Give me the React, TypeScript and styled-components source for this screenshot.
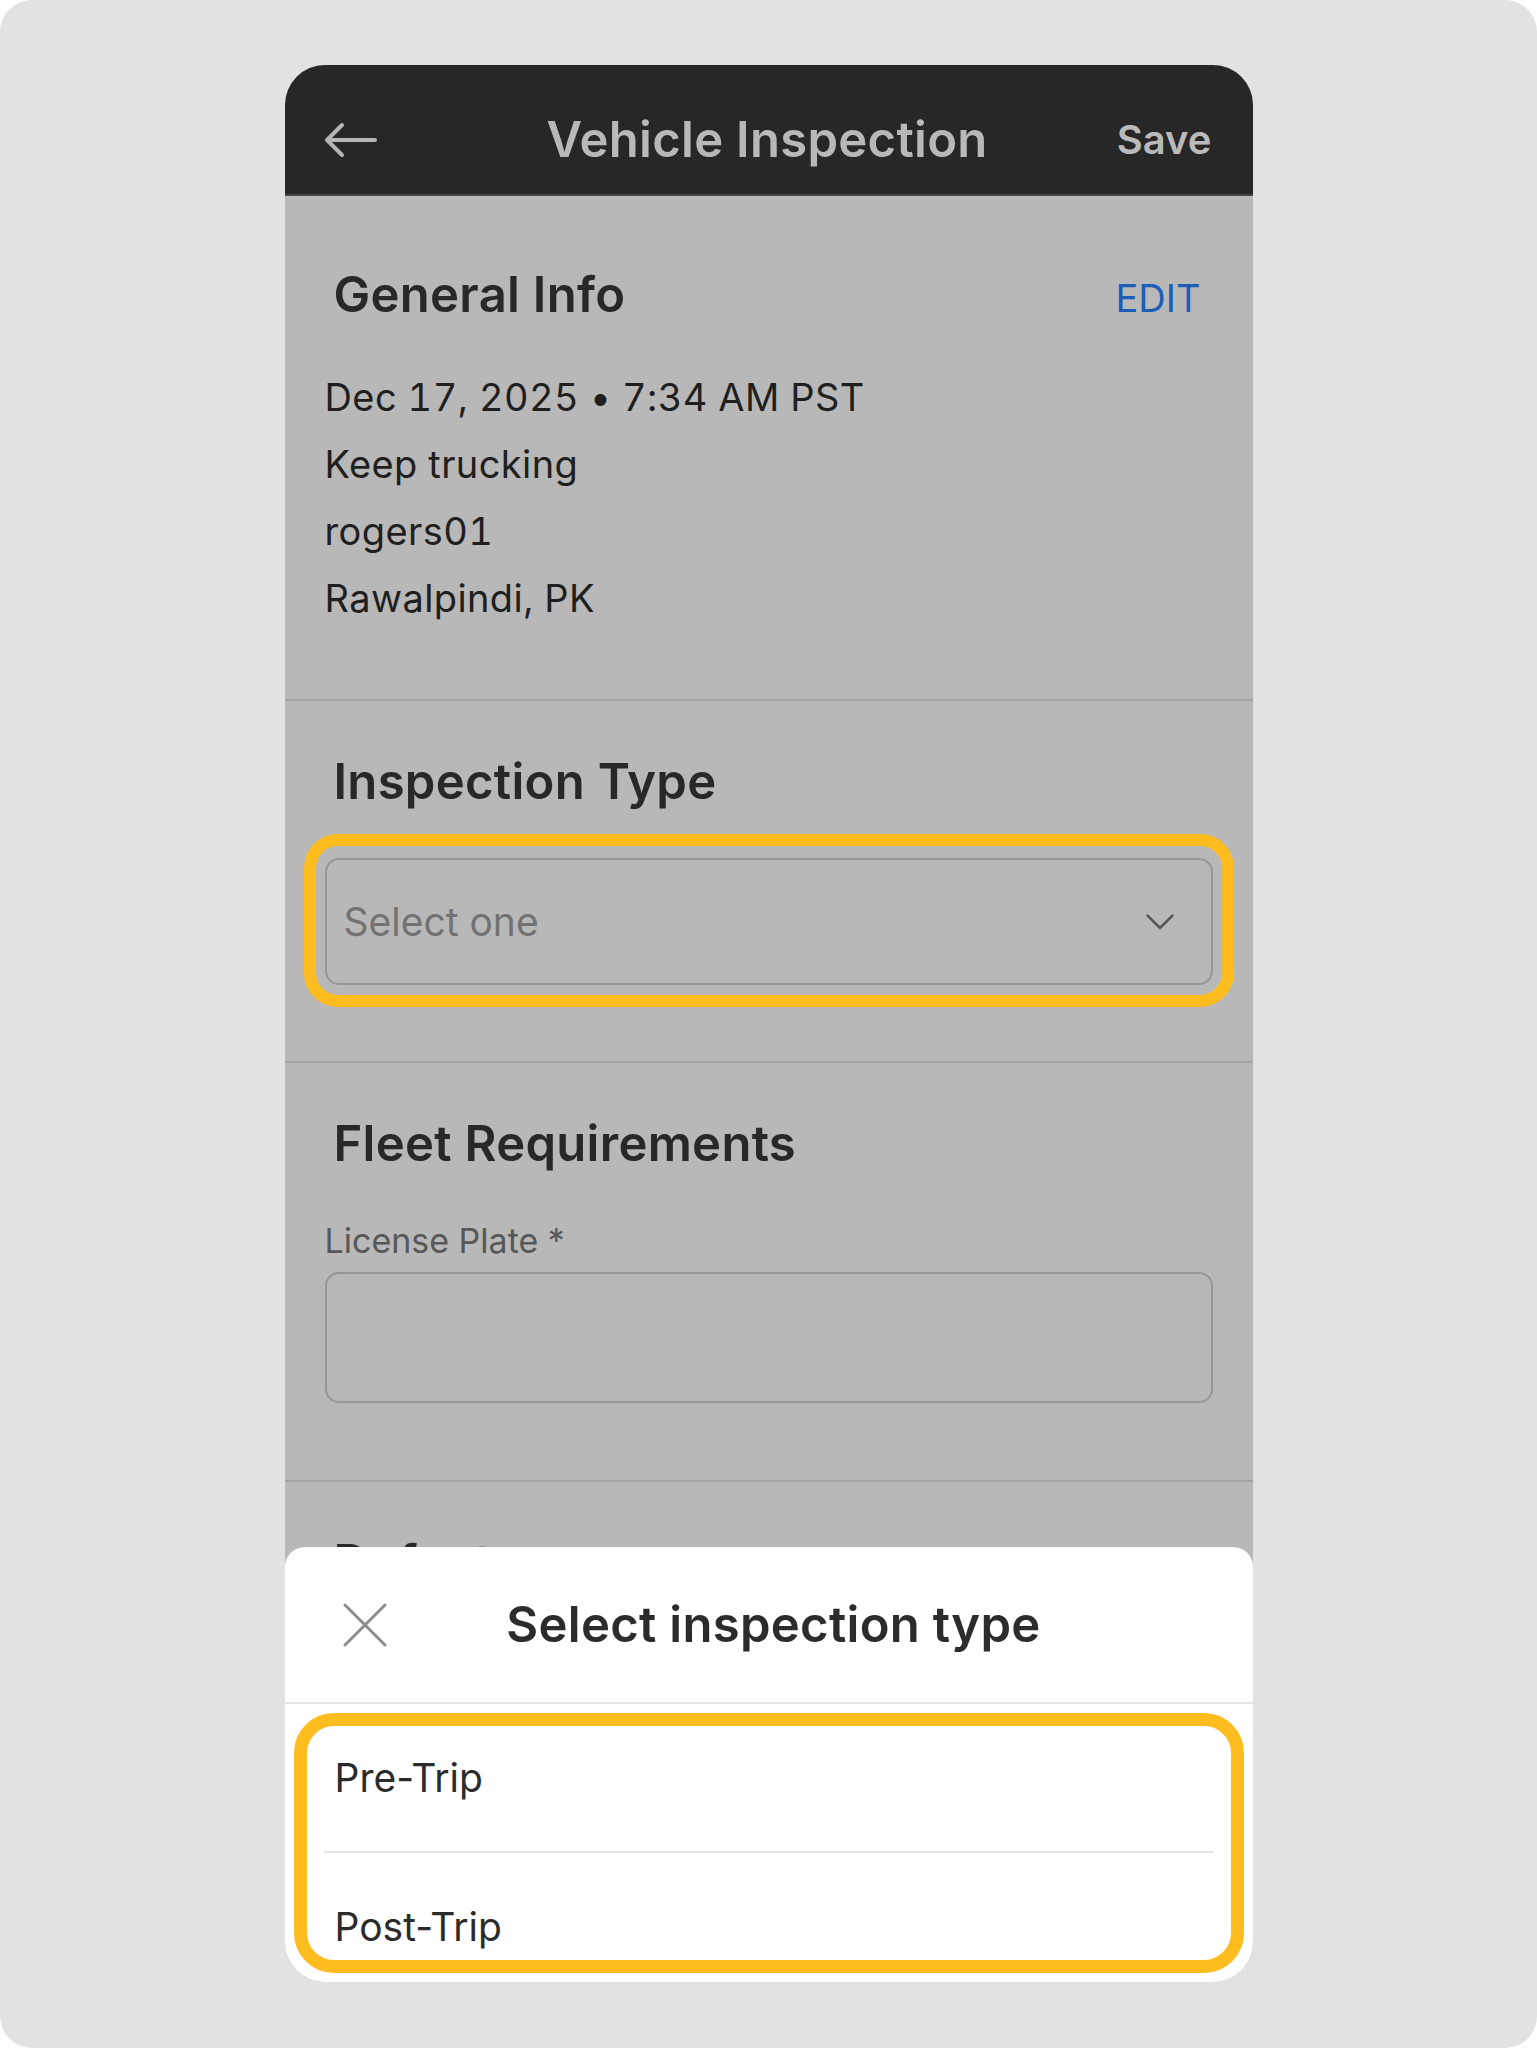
import React from 'react';
import styled, { createGlobalStyle } from 'styled-components';

const GlobalStyle = createGlobalStyle`
  html, body {
    margin: 0;
    padding: 0;
    background: #ffffff;
  }
  body {
    font-family: Inter, "Noto Sans", sans-serif;
  }
  * {
    box-sizing: border-box;
  }
`;

const generalInfo = ['Dec 17, 2025 • 7:34 AM PST', 'Keep trucking', 'rogers01', 'Rawalpindi, PK'];
const inspectionTypes = ['Pre-Trip', 'Post-Trip'];

const BackArrow = () => (
    <svg width="54" height="36" viewBox="0 0 54 36" fill="none">
        <path d="M52 18H4M19 3L4 18l15 15" stroke="#b5b5b5" strokeWidth="4" strokeLinecap="round" strokeLinejoin="round" />
    </svg>
);

const Chevron = () => (
    <svg width="28" height="16" viewBox="0 0 28 16" fill="none">
        <path d="M1.5 1.5L14 14 26.5 1.5" stroke="#575757" strokeWidth="2.5" strokeLinecap="round" strokeLinejoin="round" />
    </svg>
);

const CloseIcon = () => (
    <svg width="44" height="44" viewBox="0 0 44 44" fill="none">
        <path d="M2 2l40 40M42 2L2 42" stroke="#8c8c8c" strokeWidth="3" strokeLinecap="round" />
    </svg>
);

export default function App() {
    return (
        <>
            <GlobalStyle />
            <Page>
                <Phone>
                    <Header>
                        <IconButton>
                            <BackArrow />
                        </IconButton>
                        <HeaderTitle>Vehicle Inspection</HeaderTitle>
                        <SaveButton>Save</SaveButton>
                    </Header>

                    <Section $top={70} $bottom={67}>
                        <HeadingRow>
                            <SectionTitle>General Info</SectionTitle>
                            <EditLink>EDIT</EditLink>
                        </HeadingRow>
                        <InfoList>
                            {generalInfo.map((line) => (
                                <InfoLine key={line}>{line}</InfoLine>
                            ))}
                        </InfoList>
                    </Section>

                    <Section $top={52} $bottom={76}>
                        <HeadingRow>
                            <SectionTitle>Inspection Type</SectionTitle>
                        </HeadingRow>
                        <Highlighted $gap={47}>
                            <SelectBox>
                                <Placeholder>Select one</Placeholder>
                                <Chevron />
                            </SelectBox>
                            <Ring $top={-24} $bottom={-22} $side={-21} $width={12} $radius={34} />
                        </Highlighted>
                    </Section>

                    <Section $top={52} $bottom={77}>
                        <HeadingRow>
                            <SectionTitle>Fleet Requirements</SectionTitle>
                        </HeadingRow>
                        <FieldLabel>License Plate *</FieldLabel>
                        <TextBox />
                    </Section>

                    <Section $top={52} $bottom={60}>
                        <HeadingRow>
                            <SectionTitle>Defects</SectionTitle>
                        </HeadingRow>
                    </Section>

                    <Sheet>
                        <SheetHeader>
                            <IconButton>
                                <CloseIcon />
                            </IconButton>
                            <SheetTitle>Select inspection type</SheetTitle>
                            <span />
                        </SheetHeader>
                        <OptionList>
                            {inspectionTypes.map((type, i) => (
                                <React.Fragment key={type}>
                                    {i > 0 && <OptionDivider />}
                                    <Option>{type}</Option>
                                </React.Fragment>
                            ))}
                            <Ring $top={9} $bottom={9} $side={9} $width={13} $radius={40} />
                        </OptionList>
                    </Sheet>
                </Phone>
            </Page>
        </>
    );
}

const Page = styled.div`
    width: 1537px;
    height: 2048px;
    background: #e2e2e2;
    border-radius: 32px;
    padding-top: 65px;
    display: flex;
    justify-content: center;
    align-items: flex-start;
`;

const Phone = styled.div`
    position: relative;
    width: 968px;
    height: 1917px;
    border-radius: 40px;
    overflow: hidden;
    background: #b8b8b8;
`;

const Header = styled.header`
    height: 131px;
    background: #272727;
    border-bottom: 2px solid #464646;
    display: grid;
    grid-template-columns: 1fr auto 1fr;
    align-items: center;
    padding: 20px 41px 0 38px;
`;

const IconButton = styled.div`
    display: flex;
    align-items: center;
`;

const HeaderTitle = styled.h1`
    margin: 0;
    font-size: 49px;
    font-weight: 600;
    color: #b8b8b8;
    letter-spacing: 0.3px;
`;

const SaveButton = styled.div`
    justify-self: end;
    font-size: 40px;
    font-weight: 600;
    color: #bababa;
`;

const Section = styled.section<{ $top: number; $bottom: number }>`
    padding: ${(p) => p.$top}px 40px ${(p) => p.$bottom}px;
    border-bottom: 2px solid #a4a4a4;
`;

const HeadingRow = styled.div`
    display: flex;
    justify-content: space-between;
    align-items: baseline;
    padding: 0 12px 0 9px;
`;

const SectionTitle = styled.h2`
    margin: 0;
    font-size: 49px;
    line-height: 58px;
    font-weight: 600;
    color: #282828;
    letter-spacing: 0.3px;
`;

const EditLink = styled.span`
    font-size: 38px;
    color: #1b5eb8;
`;

const InfoList = styled.div`
    margin-top: 40px;
    display: flex;
    flex-direction: column;
`;

const InfoLine = styled.div`
    font-size: 38px;
    line-height: 67px;
    color: #1f1f1f;
    font-variant-numeric: tabular-nums;
    letter-spacing: 0.4px;
`;

const Highlighted = styled.div<{ $gap: number }>`
    position: relative;
    margin-top: ${(p) => p.$gap}px;
`;

const Ring = styled.div<{ $top: number; $bottom: number; $side: number; $width: number; $radius: number }>`
    position: absolute;
    top: ${(p) => p.$top}px;
    bottom: ${(p) => p.$bottom}px;
    left: ${(p) => p.$side}px;
    right: ${(p) => p.$side}px;
    border: ${(p) => p.$width}px solid #ffbc1f;
    border-radius: ${(p) => p.$radius}px;
    pointer-events: none;
`;

const SelectBox = styled.div`
    height: 127px;
    border: 2px solid #979797;
    border-radius: 14px;
    display: flex;
    align-items: center;
    justify-content: space-between;
    padding: 0 37px 0 17px;
`;

const Placeholder = styled.span`
    font-size: 39px;
    color: #727272;
`;

const FieldLabel = styled.div`
    margin-top: 48px;
    font-size: 34px;
    line-height: 40px;
    color: #585858;
`;

const TextBox = styled.div`
    margin-top: 11px;
    height: 131px;
    border: 2px solid #979797;
    border-radius: 14px;
`;

const Sheet = styled.div`
    position: absolute;
    left: 0;
    right: 0;
    bottom: 0;
    height: 435px;
    background: #ffffff;
    border-radius: 20px 20px 0 0;
    display: flex;
    flex-direction: column;
`;

const SheetHeader = styled.div`
    height: 157px;
    flex-shrink: 0;
    border-bottom: 2px solid #e4e4e4;
    display: grid;
    grid-template-columns: 1fr auto 1fr;
    align-items: center;
    padding-left: 58px;
    padding-right: 58px;
`;

const SheetTitle = styled.div`
    padding-left: 10px;
    font-size: 49px;
    font-weight: 600;
    color: #2c2c2c;
    letter-spacing: 0.3px;
`;

const OptionList = styled.div`
    position: relative;
    flex: 1;
    overflow: hidden;
`;

const Option = styled.div`
    height: 147px;
    display: flex;
    align-items: center;
    padding-left: 50px;
    font-size: 39px;
    color: #2b2b2b;
`;

const OptionDivider = styled.div`
    height: 2px;
    margin: 0 39px;
    background: #e4e4e4;
`;
